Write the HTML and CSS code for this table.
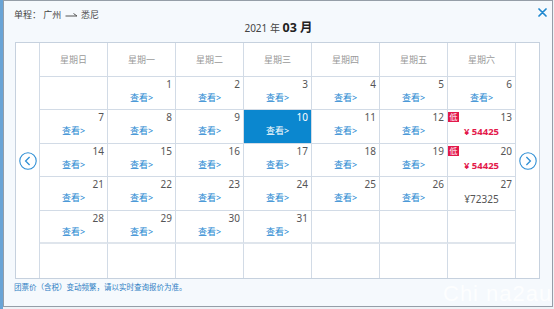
FILE: index.html
```html
<!DOCTYPE html>
<html lang="zh-CN">
<head>
<meta charset="utf-8">
<title>日历</title>
<link rel="stylesheet" href="styles.css">
</head>
<body>
<div class="dialog">
  <div class="title">单程：&nbsp;广州 <svg class="arr" width="13" height="8" viewBox="0 0 13 8"><path d="M0.5 5H12M8.5 2.5L12 5" fill="none" stroke="#555" stroke-width="1"/></svg> 悉尼</div>
  <svg class="close" width="9" height="9" viewBox="0 0 9 9"><path d="M1 1L8 8M8 1L1 8" stroke="#1f88d0" stroke-width="1.7" stroke-linecap="round"/></svg>
  <div class="month">2021 年 <b>03 月</b></div>
  <div class="cal">
    <div class="nav"><svg width="18" height="18" viewBox="0 0 18 18"><circle cx="9" cy="9" r="8.2" fill="none" stroke="#2f8fd5" stroke-width="1.1"/><path d="M10.6 5L6.6 9L10.6 13" fill="none" stroke="#2f8fd5" stroke-width="1.3"/></svg></div>
    <div class="grid">
      <div class="hd">星期日</div><div class="hd">星期一</div><div class="hd">星期二</div><div class="hd">星期三</div><div class="hd">星期四</div><div class="hd">星期五</div><div class="hd">星期六</div>

      <div class="cell"></div>
      <div class="cell"><span class="num">1</span><span class="view">查看&gt;</span></div>
      <div class="cell"><span class="num">2</span><span class="view">查看&gt;</span></div>
      <div class="cell"><span class="num">3</span><span class="view">查看&gt;</span></div>
      <div class="cell"><span class="num">4</span><span class="view">查看&gt;</span></div>
      <div class="cell"><span class="num">5</span><span class="view">查看&gt;</span></div>
      <div class="cell"><span class="num">6</span><span class="view">查看&gt;</span></div>

      <div class="cell"><span class="num">7</span><span class="view">查看&gt;</span></div>
      <div class="cell"><span class="num">8</span><span class="view">查看&gt;</span></div>
      <div class="cell"><span class="num">9</span><span class="view">查看&gt;</span></div>
      <div class="cell today"><span class="num">10</span><span class="view">查看&gt;</span></div>
      <div class="cell"><span class="num">11</span><span class="view">查看&gt;</span></div>
      <div class="cell"><span class="num">12</span><span class="view">查看&gt;</span></div>
      <div class="cell"><span class="low">低</span><span class="num">13</span><span class="price">¥ 54425</span></div>

      <div class="cell"><span class="num">14</span><span class="view">查看&gt;</span></div>
      <div class="cell"><span class="num">15</span><span class="view">查看&gt;</span></div>
      <div class="cell"><span class="num">16</span><span class="view">查看&gt;</span></div>
      <div class="cell"><span class="num">17</span><span class="view">查看&gt;</span></div>
      <div class="cell"><span class="num">18</span><span class="view">查看&gt;</span></div>
      <div class="cell"><span class="num">19</span><span class="view">查看&gt;</span></div>
      <div class="cell"><span class="low">低</span><span class="num">20</span><span class="price">¥ 54425</span></div>

      <div class="cell"><span class="num">21</span><span class="view">查看&gt;</span></div>
      <div class="cell"><span class="num">22</span><span class="view">查看&gt;</span></div>
      <div class="cell"><span class="num">23</span><span class="view">查看&gt;</span></div>
      <div class="cell"><span class="num">24</span><span class="view">查看&gt;</span></div>
      <div class="cell"><span class="num">25</span><span class="view">查看&gt;</span></div>
      <div class="cell"><span class="num">26</span><span class="view">查看&gt;</span></div>
      <div class="cell"><span class="num">27</span><span class="plain">¥72325</span></div>

      <div class="cell wk5"><span class="num">28</span><span class="view">查看&gt;</span></div>
      <div class="cell wk5"><span class="num">29</span><span class="view">查看&gt;</span></div>
      <div class="cell wk5"><span class="num">30</span><span class="view">查看&gt;</span></div>
      <div class="cell wk5"><span class="num">31</span><span class="view">查看&gt;</span></div>
      <div class="cell wk5"></div>
      <div class="cell wk5"></div>
      <div class="cell wk5"></div>

      <div class="cell last"></div>
      <div class="cell last"></div>
      <div class="cell last"></div>
      <div class="cell last"></div>
      <div class="cell last"></div>
      <div class="cell last"></div>
      <div class="cell last"></div>
    </div>
    <div class="nav"><svg width="18" height="18" viewBox="0 0 18 18"><circle cx="9" cy="9" r="8.2" fill="none" stroke="#2f8fd5" stroke-width="1.1"/><path d="M7.4 5L11.4 9L7.4 13" fill="none" stroke="#2f8fd5" stroke-width="1.3"/></svg></div>
  </div>
  <div class="note">团票价（含税）变动频繁，请以实时查询报价为准。</div>
</div>
<span class="mark">Chi na2au</span>
</body>
</html>
```

FILE: styles.css
```css
html, body {
  margin: 0;
  padding: 0;
}
body {
  width: 554px;
  height: 309px;
  overflow: hidden;
  position: relative;
  background: linear-gradient(to right, #6aa4d6 0, #6aa4d6 3px, #eef2f6 3px);
  font-family: "Noto Sans", "Noto Sans CJK SC", sans-serif;
}
.dialog {
  position: relative;
  box-sizing: border-box;
  width: 550px;
  height: 307px;
  margin-left: 3px;
  border: 1px solid #959ea8;
  background: #f5f9fd;
  padding: 7px 11px 0 10px;
}
.title {
  height: 14px;
  line-height: 14px;
  font-size: 9px;
  color: #444;
}
.arr {
  vertical-align: -1px;
  margin: 0 1px;
}
.close {
  position: absolute;
  top: 7px;
  right: 5px;
}
.month {
  text-align: center;
  line-height: 12px;
  height: 12px;
  font-size: 10px;
  color: #444;
  padding-left: 2px;
}
.month b {
  font-size: 12.5px;
  color: #222;
  font-weight: 700;
}
.cal {
  display: flex;
  box-sizing: border-box;
  width: 525px;
  height: 237px;
  margin: 8px 0 0 1px;
  border: 1px solid #c6d1de;
  background: #fff;
}
.nav {
  width: 23px;
  display: flex;
  align-items: center;
  justify-content: center;
}
.nav svg {
  display: block;
}
.grid {
  box-sizing: border-box;
  width: 477px;
  border-left: 1px solid #d2dbe6;
  display: grid;
  grid-template-columns: repeat(7, 68px);
  grid-template-rows: repeat(7, 1fr);
}
.hd {
  box-sizing: border-box;
  border-right: 1px solid #d2dbe6;
  border-bottom: 1px solid #d2dbe6;
  display: flex;
  align-items: center;
  justify-content: center;
  font-size: 9px;
  color: #9a9a9a;
}
.cell {
  position: relative;
  box-sizing: border-box;
  border-right: 1px solid #d2dbe6;
  border-bottom: 1px solid #d2dbe6;
  padding: 1px 3px 0;
  display: flex;
  flex-direction: column;
}
.cell.wk5 {
  border-bottom: 2px solid #dfe5ec;
}
.cell.last {
  border-bottom: none;
}
.num {
  text-align: right;
  font-size: 10px;
  line-height: 12px;
  color: #555;
}
.view {
  margin-top: 2px;
  text-align: center;
  font-size: 9px;
  line-height: 12px;
  color: #1c87d1;
}
.price {
  margin-top: 3px;
  text-align: center;
  font-size: 9.5px;
  line-height: 12px;
  font-weight: 700;
  color: #e3194b;
}
.plain {
  margin-top: 3px;
  text-align: center;
  font-size: 10px;
  line-height: 12px;
  color: #555;
}
.low {
  position: absolute;
  left: 0;
  top: 2px;
  width: 11px;
  height: 10px;
  background: #e3194b;
  color: #fff;
  font-size: 8px;
  line-height: 10px;
  text-align: center;
}
.today {
  background: #0b87cf;
}
.today .num,
.today .view {
  color: #fff;
}
.note {
  margin-top: 2px;
  font-size: 7.5px;
  line-height: 12px;
  color: #2f7fc4;
}
.mark {
  position: absolute;
  left: 443px;
  top: 282px;
  font-family: "Liberation Sans", sans-serif;
  font-size: 22px;
  line-height: 24px;
  color: rgba(255, 255, 255, 0.85);
  letter-spacing: 1px;
  white-space: nowrap;
}
```
